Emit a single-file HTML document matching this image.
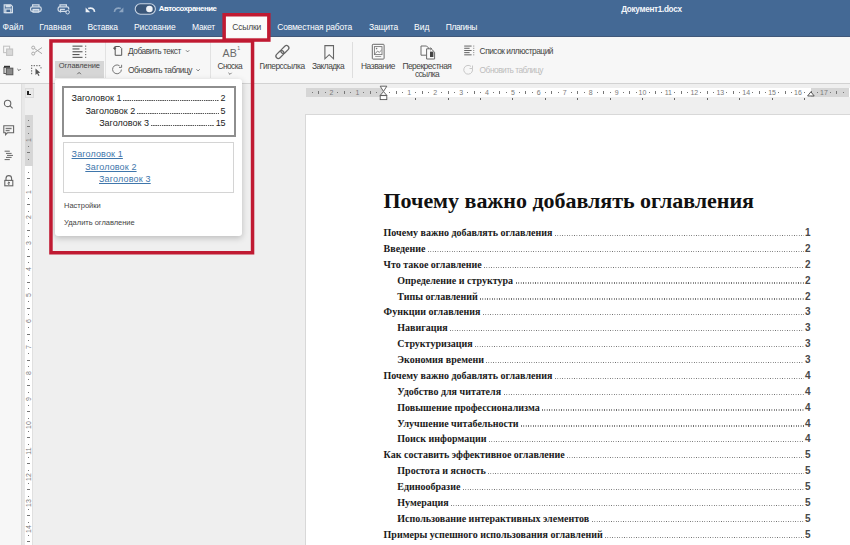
<!DOCTYPE html>
<html><head><meta charset="utf-8">
<style>
*{margin:0;padding:0;box-sizing:border-box}
html,body{width:850px;height:545px;overflow:hidden;background:#efefef;font-family:"Liberation Sans",sans-serif}
body{position:relative}
.a{position:absolute;white-space:nowrap}
svg{position:absolute;overflow:visible}
.toc{font-family:"Liberation Serif",serif;font-weight:bold;font-size:10px;line-height:10px;color:#1a1a1a}
.dots{height:1.2px;background-image:linear-gradient(to right,#6a6a6a 45%,transparent 45%);background-size:2.4px 1.2px}
.pn{font-family:"Liberation Sans",sans-serif;font-weight:bold;font-size:10px;line-height:10px;color:#484848}
.rn{font-size:7px;line-height:9px;color:#7a7a7a;text-align:center}
.vrn{font-size:7px;line-height:10px;color:#7a7a7a;text-align:center;transform:rotate(-90deg)}
</style></head><body>
<!-- header -->
<div class="a" style="left:0;top:0;width:850px;height:37px;background:#446995"></div>
<div class="a" style="left:0;top:35.5px;width:850px;height:1.5px;background:#40587a"></div>
<!-- active tab -->
<div class="a" style="left:225px;top:16px;width:43px;height:23px;background:#fbfbfb"></div>
<!-- toolbar -->
<div class="a" style="left:0;top:37px;width:850px;height:47px;background:#f7f7f7;border-bottom:1px solid #d2d2d2"></div>
<!-- left sidebar -->
<div class="a" style="left:0;top:84px;width:22px;height:461px;background:#f7f7f7;border-right:1px solid #dedede"></div>
<!-- rulers -->
<div class="a" style="left:306px;top:88px;width:544px;height:9px;background:#fff"></div>
<div class="a" style="left:306px;top:88px;width:77px;height:9px;background:#d6d6d6"></div>
<div class="a" style="left:811px;top:88px;width:38px;height:9px;background:#d6d6d6"></div>
<div class="a" style="left:22px;top:84px;width:3px;height:461px;background:#e8e8e8"></div>
<div class="a" style="left:25px;top:115px;width:7.6px;height:430px;background:#fff;border-right:0.6px solid #e0e0e0"></div>
<div class="a" style="left:25px;top:115px;width:7.6px;height:50.6px;background:#d6d6d6"></div>
<div class="a" style="left:24.5px;top:88px;width:9px;height:10px;background:#e9e9e9;border:1px solid #dadada"></div>
<div class="a" style="left:27px;top:90.5px;width:1.6px;height:4.5px;background:#222"></div>
<div class="a" style="left:27px;top:93.5px;width:4px;height:1.5px;background:#222"></div>
<div class="a" style="left:311.5px;top:92px;width:1px;height:1px;background:#777"></div>
<div class="a" style="left:318.0px;top:91px;width:1px;height:3px;background:#777"></div>
<div class="a" style="left:324.5px;top:92px;width:1px;height:1px;background:#777"></div>
<div class="a rn" style="left:321.5px;top:88px;width:20px">2</div>
<div class="a" style="left:337.4px;top:92px;width:1px;height:1px;background:#777"></div>
<div class="a" style="left:343.9px;top:91px;width:1px;height:3px;background:#777"></div>
<div class="a" style="left:350.4px;top:92px;width:1px;height:1px;background:#777"></div>
<div class="a rn" style="left:347.4px;top:88px;width:20px">1</div>
<div class="a" style="left:363.4px;top:92px;width:1px;height:1px;background:#777"></div>
<div class="a" style="left:369.8px;top:91px;width:1px;height:3px;background:#777"></div>
<div class="a" style="left:376.3px;top:92px;width:1px;height:1px;background:#777"></div>
<div class="a" style="left:389.3px;top:92px;width:1px;height:1px;background:#777"></div>
<div class="a" style="left:395.8px;top:91px;width:1px;height:3px;background:#777"></div>
<div class="a" style="left:402.2px;top:92px;width:1px;height:1px;background:#777"></div>
<div class="a rn" style="left:399.2px;top:88px;width:20px">1</div>
<div class="a" style="left:415.2px;top:92px;width:1px;height:1px;background:#777"></div>
<div class="a" style="left:421.7px;top:91px;width:1px;height:3px;background:#777"></div>
<div class="a" style="left:428.2px;top:92px;width:1px;height:1px;background:#777"></div>
<div class="a rn" style="left:425.1px;top:88px;width:20px">2</div>
<div class="a" style="left:441.1px;top:92px;width:1px;height:1px;background:#777"></div>
<div class="a" style="left:447.6px;top:91px;width:1px;height:3px;background:#777"></div>
<div class="a" style="left:454.1px;top:92px;width:1px;height:1px;background:#777"></div>
<div class="a rn" style="left:451.1px;top:88px;width:20px">3</div>
<div class="a" style="left:467.0px;top:92px;width:1px;height:1px;background:#777"></div>
<div class="a" style="left:473.5px;top:91px;width:1px;height:3px;background:#777"></div>
<div class="a" style="left:480.0px;top:92px;width:1px;height:1px;background:#777"></div>
<div class="a rn" style="left:477.0px;top:88px;width:20px">4</div>
<div class="a" style="left:493.0px;top:92px;width:1px;height:1px;background:#777"></div>
<div class="a" style="left:499.4px;top:91px;width:1px;height:3px;background:#777"></div>
<div class="a" style="left:505.9px;top:92px;width:1px;height:1px;background:#777"></div>
<div class="a rn" style="left:502.9px;top:88px;width:20px">5</div>
<div class="a" style="left:518.9px;top:92px;width:1px;height:1px;background:#777"></div>
<div class="a" style="left:525.4px;top:91px;width:1px;height:3px;background:#777"></div>
<div class="a" style="left:531.8px;top:92px;width:1px;height:1px;background:#777"></div>
<div class="a rn" style="left:528.8px;top:88px;width:20px">6</div>
<div class="a" style="left:544.8px;top:92px;width:1px;height:1px;background:#777"></div>
<div class="a" style="left:551.3px;top:91px;width:1px;height:3px;background:#777"></div>
<div class="a" style="left:557.8px;top:92px;width:1px;height:1px;background:#777"></div>
<div class="a rn" style="left:554.7px;top:88px;width:20px">7</div>
<div class="a" style="left:570.7px;top:92px;width:1px;height:1px;background:#777"></div>
<div class="a" style="left:577.2px;top:91px;width:1px;height:3px;background:#777"></div>
<div class="a" style="left:583.7px;top:92px;width:1px;height:1px;background:#777"></div>
<div class="a rn" style="left:580.7px;top:88px;width:20px">8</div>
<div class="a" style="left:596.6px;top:92px;width:1px;height:1px;background:#777"></div>
<div class="a" style="left:603.1px;top:91px;width:1px;height:3px;background:#777"></div>
<div class="a" style="left:609.6px;top:92px;width:1px;height:1px;background:#777"></div>
<div class="a rn" style="left:606.6px;top:88px;width:20px">9</div>
<div class="a" style="left:622.6px;top:92px;width:1px;height:1px;background:#777"></div>
<div class="a" style="left:629.0px;top:91px;width:1px;height:3px;background:#777"></div>
<div class="a" style="left:635.5px;top:92px;width:1px;height:1px;background:#777"></div>
<div class="a rn" style="left:632.5px;top:88px;width:20px">10</div>
<div class="a" style="left:648.5px;top:92px;width:1px;height:1px;background:#777"></div>
<div class="a" style="left:655.0px;top:91px;width:1px;height:3px;background:#777"></div>
<div class="a" style="left:661.4px;top:92px;width:1px;height:1px;background:#777"></div>
<div class="a rn" style="left:658.4px;top:88px;width:20px">11</div>
<div class="a" style="left:674.4px;top:92px;width:1px;height:1px;background:#777"></div>
<div class="a" style="left:680.9px;top:91px;width:1px;height:3px;background:#777"></div>
<div class="a" style="left:687.4px;top:92px;width:1px;height:1px;background:#777"></div>
<div class="a rn" style="left:684.3px;top:88px;width:20px">12</div>
<div class="a" style="left:700.3px;top:92px;width:1px;height:1px;background:#777"></div>
<div class="a" style="left:706.8px;top:91px;width:1px;height:3px;background:#777"></div>
<div class="a" style="left:713.3px;top:92px;width:1px;height:1px;background:#777"></div>
<div class="a rn" style="left:710.3px;top:88px;width:20px">13</div>
<div class="a" style="left:726.2px;top:92px;width:1px;height:1px;background:#777"></div>
<div class="a" style="left:732.7px;top:91px;width:1px;height:3px;background:#777"></div>
<div class="a" style="left:739.2px;top:92px;width:1px;height:1px;background:#777"></div>
<div class="a rn" style="left:736.2px;top:88px;width:20px">14</div>
<div class="a" style="left:752.2px;top:92px;width:1px;height:1px;background:#777"></div>
<div class="a" style="left:758.6px;top:91px;width:1px;height:3px;background:#777"></div>
<div class="a" style="left:765.1px;top:92px;width:1px;height:1px;background:#777"></div>
<div class="a rn" style="left:762.1px;top:88px;width:20px">15</div>
<div class="a" style="left:778.1px;top:92px;width:1px;height:1px;background:#777"></div>
<div class="a" style="left:784.6px;top:91px;width:1px;height:3px;background:#777"></div>
<div class="a" style="left:791.0px;top:92px;width:1px;height:1px;background:#777"></div>
<div class="a rn" style="left:788.0px;top:88px;width:20px">16</div>
<div class="a" style="left:804.0px;top:92px;width:1px;height:1px;background:#777"></div>
<div class="a" style="left:810.5px;top:91px;width:1px;height:3px;background:#777"></div>
<div class="a" style="left:817.0px;top:92px;width:1px;height:1px;background:#777"></div>
<div class="a rn" style="left:813.9px;top:88px;width:20px">17</div>
<div class="a" style="left:829.9px;top:92px;width:1px;height:1px;background:#777"></div>
<div class="a" style="left:836.4px;top:91px;width:1px;height:3px;background:#777"></div>
<div class="a" style="left:842.9px;top:92px;width:1px;height:1px;background:#777"></div>
<div class="a" style="left:415.2px;top:98px;width:1px;height:2px;background:#666"></div>
<div class="a" style="left:447.6px;top:98px;width:1px;height:2px;background:#666"></div>
<div class="a" style="left:480.0px;top:98px;width:1px;height:2px;background:#666"></div>
<div class="a" style="left:512.4px;top:98px;width:1px;height:2px;background:#666"></div>
<div class="a" style="left:544.8px;top:98px;width:1px;height:2px;background:#666"></div>
<div class="a" style="left:577.2px;top:98px;width:1px;height:2px;background:#666"></div>
<div class="a" style="left:609.6px;top:98px;width:1px;height:2px;background:#666"></div>
<div class="a" style="left:642.0px;top:98px;width:1px;height:2px;background:#666"></div>
<div class="a" style="left:674.4px;top:98px;width:1px;height:2px;background:#666"></div>
<div class="a" style="left:706.8px;top:98px;width:1px;height:2px;background:#666"></div>
<div class="a" style="left:739.2px;top:98px;width:1px;height:2px;background:#666"></div>
<div class="a" style="left:771.6px;top:98px;width:1px;height:2px;background:#666"></div>
<div class="a" style="left:804.0px;top:98px;width:1px;height:2px;background:#666"></div>
<div class="a" style="left:27.8px;top:119.7px;width:1px;height:1px;background:#777"></div>
<div class="a" style="left:26.5px;top:126.2px;width:3.5px;height:1px;background:#777"></div>
<div class="a" style="left:27.8px;top:132.7px;width:1px;height:1px;background:#777"></div>
<div class="a vrn" style="left:18.6px;top:134.7px;width:20px;height:10px">1</div>
<div class="a" style="left:27.8px;top:145.7px;width:1px;height:1px;background:#777"></div>
<div class="a" style="left:26.5px;top:152.1px;width:3.5px;height:1px;background:#777"></div>
<div class="a" style="left:27.8px;top:158.6px;width:1px;height:1px;background:#777"></div>
<div class="a" style="left:27.8px;top:171.6px;width:1px;height:1px;background:#777"></div>
<div class="a" style="left:26.5px;top:178.1px;width:3.5px;height:1px;background:#777"></div>
<div class="a" style="left:27.8px;top:184.5px;width:1px;height:1px;background:#777"></div>
<div class="a vrn" style="left:18.6px;top:186.5px;width:20px;height:10px">1</div>
<div class="a" style="left:27.8px;top:197.5px;width:1px;height:1px;background:#777"></div>
<div class="a" style="left:26.5px;top:204.0px;width:3.5px;height:1px;background:#777"></div>
<div class="a" style="left:27.8px;top:210.5px;width:1px;height:1px;background:#777"></div>
<div class="a vrn" style="left:18.6px;top:212.4px;width:20px;height:10px">2</div>
<div class="a" style="left:27.8px;top:223.4px;width:1px;height:1px;background:#777"></div>
<div class="a" style="left:26.5px;top:229.9px;width:3.5px;height:1px;background:#777"></div>
<div class="a" style="left:27.8px;top:236.4px;width:1px;height:1px;background:#777"></div>
<div class="a vrn" style="left:18.6px;top:238.4px;width:20px;height:10px">3</div>
<div class="a" style="left:27.8px;top:249.3px;width:1px;height:1px;background:#777"></div>
<div class="a" style="left:26.5px;top:255.8px;width:3.5px;height:1px;background:#777"></div>
<div class="a" style="left:27.8px;top:262.3px;width:1px;height:1px;background:#777"></div>
<div class="a vrn" style="left:18.6px;top:264.3px;width:20px;height:10px">4</div>
<div class="a" style="left:27.8px;top:275.3px;width:1px;height:1px;background:#777"></div>
<div class="a" style="left:26.5px;top:281.7px;width:3.5px;height:1px;background:#777"></div>
<div class="a" style="left:27.8px;top:288.2px;width:1px;height:1px;background:#777"></div>
<div class="a vrn" style="left:18.6px;top:290.2px;width:20px;height:10px">5</div>
<div class="a" style="left:27.8px;top:301.2px;width:1px;height:1px;background:#777"></div>
<div class="a" style="left:26.5px;top:307.7px;width:3.5px;height:1px;background:#777"></div>
<div class="a" style="left:27.8px;top:314.1px;width:1px;height:1px;background:#777"></div>
<div class="a vrn" style="left:18.6px;top:316.1px;width:20px;height:10px">6</div>
<div class="a" style="left:27.8px;top:327.1px;width:1px;height:1px;background:#777"></div>
<div class="a" style="left:26.5px;top:333.6px;width:3.5px;height:1px;background:#777"></div>
<div class="a" style="left:27.8px;top:340.1px;width:1px;height:1px;background:#777"></div>
<div class="a vrn" style="left:18.6px;top:342.0px;width:20px;height:10px">7</div>
<div class="a" style="left:27.8px;top:353.0px;width:1px;height:1px;background:#777"></div>
<div class="a" style="left:26.5px;top:359.5px;width:3.5px;height:1px;background:#777"></div>
<div class="a" style="left:27.8px;top:366.0px;width:1px;height:1px;background:#777"></div>
<div class="a vrn" style="left:18.6px;top:368.0px;width:20px;height:10px">8</div>
<div class="a" style="left:27.8px;top:378.9px;width:1px;height:1px;background:#777"></div>
<div class="a" style="left:26.5px;top:385.4px;width:3.5px;height:1px;background:#777"></div>
<div class="a" style="left:27.8px;top:391.9px;width:1px;height:1px;background:#777"></div>
<div class="a vrn" style="left:18.6px;top:393.9px;width:20px;height:10px">9</div>
<div class="a" style="left:27.8px;top:404.9px;width:1px;height:1px;background:#777"></div>
<div class="a" style="left:26.5px;top:411.3px;width:3.5px;height:1px;background:#777"></div>
<div class="a" style="left:27.8px;top:417.8px;width:1px;height:1px;background:#777"></div>
<div class="a vrn" style="left:18.6px;top:419.8px;width:20px;height:10px">10</div>
<div class="a" style="left:27.8px;top:430.8px;width:1px;height:1px;background:#777"></div>
<div class="a" style="left:26.5px;top:437.3px;width:3.5px;height:1px;background:#777"></div>
<div class="a" style="left:27.8px;top:443.7px;width:1px;height:1px;background:#777"></div>
<div class="a vrn" style="left:18.6px;top:445.7px;width:20px;height:10px">11</div>
<div class="a" style="left:27.8px;top:456.7px;width:1px;height:1px;background:#777"></div>
<div class="a" style="left:26.5px;top:463.2px;width:3.5px;height:1px;background:#777"></div>
<div class="a" style="left:27.8px;top:469.7px;width:1px;height:1px;background:#777"></div>
<div class="a vrn" style="left:18.6px;top:471.6px;width:20px;height:10px">12</div>
<div class="a" style="left:27.8px;top:482.6px;width:1px;height:1px;background:#777"></div>
<div class="a" style="left:26.5px;top:489.1px;width:3.5px;height:1px;background:#777"></div>
<div class="a" style="left:27.8px;top:495.6px;width:1px;height:1px;background:#777"></div>
<div class="a vrn" style="left:18.6px;top:497.6px;width:20px;height:10px">13</div>
<div class="a" style="left:27.8px;top:508.5px;width:1px;height:1px;background:#777"></div>
<div class="a" style="left:26.5px;top:515.0px;width:3.5px;height:1px;background:#777"></div>
<div class="a" style="left:27.8px;top:521.5px;width:1px;height:1px;background:#777"></div>
<div class="a vrn" style="left:18.6px;top:523.5px;width:20px;height:10px">14</div>
<div class="a" style="left:27.8px;top:534.5px;width:1px;height:1px;background:#777"></div>
<div class="a" style="left:26.5px;top:540.9px;width:3.5px;height:1px;background:#777"></div>
<!-- page -->
<div class="a" style="left:305px;top:114px;width:560px;height:440px;background:#fff;border:1px solid #d8d8d8"></div>
<div class="a toc" style="left:383.6px;top:228.00px">Почему важно добавлять оглавления</div>
<div class="a dots" style="left:554.9px;top:234.80px;width:249.6px"></div>
<div class="a pn" style="left:805px;top:228.00px">1</div>
<div class="a toc" style="left:383.6px;top:244.00px">Введение</div>
<div class="a dots" style="left:427.9px;top:250.68px;width:376.6px"></div>
<div class="a pn" style="left:805px;top:244.00px">2</div>
<div class="a toc" style="left:383.6px;top:260.00px">Что такое оглавление</div>
<div class="a dots" style="left:484.3px;top:266.56px;width:320.2px"></div>
<div class="a pn" style="left:805px;top:260.00px">2</div>
<div class="a toc" style="left:397.3px;top:276.00px">Определение и структура</div>
<div class="a dots" style="left:515.5px;top:282.44px;width:289.0px"></div>
<div class="a pn" style="left:805px;top:276.00px">2</div>
<div class="a toc" style="left:397.3px;top:292.00px">Типы оглавлений</div>
<div class="a dots" style="left:480.3px;top:298.32px;width:324.2px"></div>
<div class="a pn" style="left:805px;top:292.00px">2</div>
<div class="a toc" style="left:383.6px;top:307.00px">Функции оглавления</div>
<div class="a dots" style="left:482.9px;top:314.20px;width:321.6px"></div>
<div class="a pn" style="left:805px;top:307.00px">3</div>
<div class="a toc" style="left:397.3px;top:323.00px">Навигация</div>
<div class="a dots" style="left:450.2px;top:330.08px;width:354.3px"></div>
<div class="a pn" style="left:805px;top:323.00px">3</div>
<div class="a toc" style="left:397.3px;top:339.00px">Структуризация</div>
<div class="a dots" style="left:475.2px;top:345.96px;width:329.3px"></div>
<div class="a pn" style="left:805px;top:339.00px">3</div>
<div class="a toc" style="left:397.3px;top:355.00px">Экономия времени</div>
<div class="a dots" style="left:486.4px;top:361.84px;width:318.1px"></div>
<div class="a pn" style="left:805px;top:355.00px">3</div>
<div class="a toc" style="left:383.6px;top:371.00px">Почему важно добавлять оглавления</div>
<div class="a dots" style="left:554.9px;top:377.72px;width:249.6px"></div>
<div class="a pn" style="left:805px;top:371.00px">4</div>
<div class="a toc" style="left:397.3px;top:387.00px">Удобство для читателя</div>
<div class="a dots" style="left:503.6px;top:393.60px;width:300.9px"></div>
<div class="a pn" style="left:805px;top:387.00px">4</div>
<div class="a toc" style="left:397.3px;top:403.00px">Повышение профессионализма</div>
<div class="a dots" style="left:542.2px;top:409.48px;width:262.3px"></div>
<div class="a pn" style="left:805px;top:403.00px">4</div>
<div class="a toc" style="left:397.3px;top:419.00px">Улучшение читабельности</div>
<div class="a dots" style="left:521.1px;top:425.36px;width:283.4px"></div>
<div class="a pn" style="left:805px;top:419.00px">4</div>
<div class="a toc" style="left:397.3px;top:434.00px">Поиск информации</div>
<div class="a dots" style="left:488.9px;top:441.24px;width:315.6px"></div>
<div class="a pn" style="left:805px;top:434.00px">4</div>
<div class="a toc" style="left:383.6px;top:450.00px">Как составить эффективное оглавление</div>
<div class="a dots" style="left:567.3px;top:457.12px;width:237.2px"></div>
<div class="a pn" style="left:805px;top:450.00px">5</div>
<div class="a toc" style="left:397.3px;top:466.00px">Простота и ясность</div>
<div class="a dots" style="left:488.3px;top:473.00px;width:316.2px"></div>
<div class="a pn" style="left:805px;top:466.00px">5</div>
<div class="a toc" style="left:397.3px;top:482.00px">Единообразие</div>
<div class="a dots" style="left:462.8px;top:488.88px;width:341.7px"></div>
<div class="a pn" style="left:805px;top:482.00px">5</div>
<div class="a toc" style="left:397.3px;top:498.00px">Нумерация</div>
<div class="a dots" style="left:451.2px;top:504.76px;width:353.3px"></div>
<div class="a pn" style="left:805px;top:498.00px">5</div>
<div class="a toc" style="left:397.3px;top:514.00px">Использование интерактивных элементов</div>
<div class="a dots" style="left:591.6px;top:520.64px;width:212.9px"></div>
<div class="a pn" style="left:805px;top:514.00px">5</div>
<div class="a toc" style="left:383.6px;top:530.00px">Примеры успешного использования оглавлений</div>
<div class="a dots" style="left:605.2px;top:536.52px;width:199.3px"></div>
<div class="a pn" style="left:805px;top:530.00px">5</div>

<!-- toolbar grey button -->
<div class="a" style="left:55px;top:61px;width:49px;height:17px;background:#d6d6d6"></div>
<!-- separators -->
<div class="a" style="left:105px;top:42px;width:1px;height:36px;background:#e2e2e2"></div>
<div class="a" style="left:210px;top:42px;width:1px;height:36px;background:#e2e2e2"></div>
<div class="a" style="left:352px;top:42px;width:1px;height:36px;background:#dedede"></div>

<!-- dropdown panel -->
<div class="a" style="left:55px;top:79px;width:187px;height:156.5px;background:#fff;border-radius:3px;box-shadow:0 2px 6px rgba(0,0,0,0.22)"></div>
<div class="a" style="left:62px;top:86px;width:174px;height:51px;border:2px solid #8e8e8e"></div>
<div class="a" style="left:63px;top:142px;width:171px;height:50.5px;border:1px solid #d4d4d4"></div>
<div class="a" style="left:123.4px;top:100px;width:95.6px;height:1px;background-image:linear-gradient(to right,#555 50%,transparent 50%);background-size:2.2px 1px"></div>
<div class="a" style="left:137.2px;top:112.6px;width:81.8px;height:1px;background-image:linear-gradient(to right,#555 50%,transparent 50%);background-size:2.2px 1px"></div>
<div class="a" style="left:151px;top:124.8px;width:62.8px;height:1px;background-image:linear-gradient(to right,#555 50%,transparent 50%);background-size:2.2px 1px"></div>

<div class="a" style="left:621.20px;top:6px;font:bold 8.2px/8.2px 'Liberation Sans';color:#f4f7fb;letter-spacing:-0.313px;">Документ1.docx</div>
<div class="a" style="left:158.80px;top:5px;font:bold 7.8px/7.8px 'Liberation Sans';color:#ffffff;letter-spacing:-0.452px;">Автосохранение</div>
<div class="a" style="left:2.60px;top:23px;font:normal 8.5px/8.5px 'Liberation Sans';color:#ffffff;letter-spacing:-0.052px;">Файл</div>
<div class="a" style="left:39.30px;top:23px;font:normal 8.5px/8.5px 'Liberation Sans';color:#ffffff;letter-spacing:-0.051px;">Главная</div>
<div class="a" style="left:87.50px;top:23px;font:normal 8.5px/8.5px 'Liberation Sans';color:#ffffff;letter-spacing:-0.185px;">Вставка</div>
<div class="a" style="left:134.00px;top:23px;font:normal 8.5px/8.5px 'Liberation Sans';color:#ffffff;letter-spacing:-0.146px;">Рисование</div>
<div class="a" style="left:192.00px;top:23px;font:normal 8.5px/8.5px 'Liberation Sans';color:#ffffff;letter-spacing:-0.252px;">Макет</div>
<div class="a" style="left:277.20px;top:23px;font:normal 8.5px/8.5px 'Liberation Sans';color:#ffffff;letter-spacing:-0.175px;">Совместная работа</div>
<div class="a" style="left:369.00px;top:23px;font:normal 8.5px/8.5px 'Liberation Sans';color:#ffffff;letter-spacing:-0.190px;">Защита</div>
<div class="a" style="left:414.00px;top:23px;font:normal 8.5px/8.5px 'Liberation Sans';color:#ffffff;letter-spacing:0.036px;">Вид</div>
<div class="a" style="left:445.80px;top:23px;font:normal 8.5px/8.5px 'Liberation Sans';color:#ffffff;letter-spacing:-0.465px;">Плагины</div>
<div class="a" style="left:232.20px;top:23px;font:normal 8.5px/8.5px 'Liberation Sans';color:#444444;letter-spacing:-0.156px;">Ссылки</div>
<div class="a" style="left:58.80px;top:62px;font:normal 7.5px/7.5px 'Liberation Sans';color:#444444;letter-spacing:-0.063px;">Оглавление</div>
<div class="a" style="left:127.90px;top:47px;font:normal 8.4px/8.4px 'Liberation Sans';color:#444444;letter-spacing:-0.467px;">Добавить текст</div>
<div class="a" style="left:128.00px;top:66px;font:normal 8.4px/8.4px 'Liberation Sans';color:#444444;letter-spacing:-0.477px;">Обновить таблицу</div>
<div class="a" style="left:217.60px;top:62px;font:normal 8.4px/8.4px 'Liberation Sans';color:#444444;letter-spacing:-0.605px;">Сноска</div>
<div class="a" style="left:259.40px;top:62px;font:normal 8.4px/8.4px 'Liberation Sans';color:#444444;letter-spacing:-0.472px;">Гиперссылка</div>
<div class="a" style="left:312.00px;top:62px;font:normal 8.4px/8.4px 'Liberation Sans';color:#444444;letter-spacing:-0.553px;">Закладка</div>
<div class="a" style="left:361.00px;top:62px;font:normal 8.4px/8.4px 'Liberation Sans';color:#444444;letter-spacing:-0.430px;">Название</div>
<div class="a" style="left:402.40px;top:62px;font:normal 8.4px/8.4px 'Liberation Sans';color:#444444;letter-spacing:-0.486px;">Перекрестная</div>
<div class="a" style="left:415.00px;top:70px;font:normal 8.4px/8.4px 'Liberation Sans';color:#444444;letter-spacing:-0.633px;">ссылка</div>
<div class="a" style="left:479.60px;top:47px;font:normal 8.4px/8.4px 'Liberation Sans';color:#444444;letter-spacing:-0.501px;">Список иллюстраций</div>
<div class="a" style="left:479.60px;top:66px;font:normal 8.4px/8.4px 'Liberation Sans';color:#bdbdbd;letter-spacing:-0.514px;">Обновить таблицу</div>
<div class="a" style="left:71.60px;top:94px;font:normal 9px/9px 'Liberation Sans';color:#222222;letter-spacing:-0.003px;">Заголовок 1</div>
<div class="a" style="left:85.40px;top:107px;font:normal 9px/9px 'Liberation Sans';color:#222222;letter-spacing:-0.003px;">Заголовок 2</div>
<div class="a" style="left:99.20px;top:119px;font:normal 9px/9px 'Liberation Sans';color:#222222;letter-spacing:-0.003px;">Заголовок 3</div>
<div class="a" style="left:220.40px;top:94px;font:normal 9px/9px 'Liberation Sans';color:#222222;letter-spacing:-0.216px;">2</div>
<div class="a" style="left:220.40px;top:107px;font:normal 9px/9px 'Liberation Sans';color:#222222;letter-spacing:-0.216px;">5</div>
<div class="a" style="left:215.70px;top:119px;font:normal 9px/9px 'Liberation Sans';color:#222222;letter-spacing:-0.108px;">15</div>
<div class="a" style="left:71.60px;top:150px;font:normal 9px/9px 'Liberation Sans';color:#3f76ab;letter-spacing:0.134px;text-decoration:underline;text-underline-offset:0.6px;">Заголовок 1</div>
<div class="a" style="left:85.30px;top:163px;font:normal 9px/9px 'Liberation Sans';color:#3f76ab;letter-spacing:0.134px;text-decoration:underline;text-underline-offset:0.6px;">Заголовок 2</div>
<div class="a" style="left:99.00px;top:175px;font:normal 9px/9px 'Liberation Sans';color:#3f76ab;letter-spacing:0.170px;text-decoration:underline;text-underline-offset:0.6px;">Заголовок 3</div>
<div class="a" style="left:64.10px;top:202px;font:normal 7.5px/7.5px 'Liberation Sans';color:#444444;letter-spacing:-0.031px;">Настройки</div>
<div class="a" style="left:64.10px;top:219px;font:normal 7.5px/7.5px 'Liberation Sans';color:#444444;letter-spacing:-0.015px;">Удалить оглавление</div>
<div class="a" style="left:383.50px;top:190px;font:bold 22px/22px 'Liberation Serif';color:#111111;letter-spacing:-0.024px;">Почему важно добавлять оглавления</div>

<!-- ICONS header -->
<svg style="left:0;top:0" width="850" height="37" viewBox="0 0 850 37">
  <g fill="none" stroke="#d5dfea" stroke-width="1.2">
    <!-- save -->
    <path d="M4.2 4.8h6.6l1.6 1.6v6.2h-8.2z"/>
    <rect x="5.8" y="9" width="5" height="3.6"/>
  </g>
  <rect x="5.6" y="4.8" width="5.2" height="2.6" fill="#d5dfea"/>
  <g fill="none" stroke="#d5dfea" stroke-width="1.2">
    <!-- print -->
    <path d="M32.6 6.8v-2h6.4v2"/>
    <rect x="30.6" y="6.8" width="10.6" height="4.6" rx="1.6"/>
    <rect x="33" y="9.4" width="5.8" height="2.8" fill="#a9bcd3"/>
    <!-- quick print -->
    <path d="M60 6.8v-2h6.4v2"/>
    <path d="M66.5 11.4h-6.8a1.6 1.6 0 0 1-1.6-1.6v-1.4a1.6 1.6 0 0 1 1.6-1.6h7.4a1.6 1.6 0 0 1 1.6 1.6v1"/>
    <path d="M60.5 12.4v-3h4.4"/>
    <circle cx="67.6" cy="12.2" r="1.8" stroke-width="1"/>
  </g>
  <!-- undo -->
  <path d="M94.6 11.8c-0.4-3-3-4.6-6.4-3.2" fill="none" stroke="#eef2f7" stroke-width="1.6"/>
  <path d="M85.6 7.6v4.6h4.6z" fill="#eef2f7"/>
  <!-- redo -->
  <path d="M114.4 11.8c0.4-3 3-4.6 6.4-3.2" fill="none" stroke="#8ea6c2" stroke-width="1.6"/>
  <path d="M123.4 7.6v4.6h-4.6z" fill="#8ea6c2"/>
  <!-- toggle -->
  <rect x="135.2" y="3.8" width="20.2" height="10.4" rx="5.2" fill="#3a5679" stroke="#c8d5e5" stroke-width="1.1"/>
  <circle cx="149.4" cy="9" r="3.3" fill="#f0f3f8"/>
</svg>

<!-- ICONS toolbar -->
<svg style="left:0;top:37px" width="850" height="47" viewBox="0 37 850 47">
  <!-- copy (disabled) -->
  <g fill="none" stroke="#c4c4c4" stroke-width="1.1">
    <rect x="3.6" y="46.2" width="6" height="6.4"/>
    <rect x="6.6" y="49" width="6" height="6.4" fill="#d8d8d8"/>
  </g>
  <!-- scissors -->
  <g fill="none" stroke="#a9a9a9" stroke-width="1">
    <circle cx="33.2" cy="47.6" r="1.5"/>
    <circle cx="33.2" cy="53.6" r="1.5"/>
    <path d="M34.5 48.5l7.5 5.2M34.5 52.7l7.5-5.2"/>
  </g>
  <!-- paste -->
  <g stroke="#5a5a5a" stroke-width="1.1">
    <path d="M4 67v6.5h2" fill="none"/>
    <rect x="4" y="65.8" width="6" height="2" fill="#333" stroke="none"/>
    <rect x="6.3" y="68.2" width="6.5" height="6.5" fill="#8a8a8a"/>
  </g>
  <path d="M17.4 69l1.6 1.6 1.6-1.6" fill="none" stroke="#555" stroke-width="0.9"/>
  <!-- select all -->
  <g fill="#777">
    <rect x="31" y="65" width="1.4" height="1.2"/><rect x="33.6" y="65" width="1.4" height="1.2"/><rect x="36.2" y="65" width="1.4" height="1.2"/><rect x="38.8" y="65" width="1.4" height="1.2"/>
    <rect x="31" y="67.6" width="1.2" height="1.4"/><rect x="31" y="70.2" width="1.2" height="1.4"/><rect x="31" y="72.8" width="1.2" height="1.4"/>
    <rect x="40.4" y="67.2" width="1.2" height="1.2"/>
  </g>
  <path d="M35.5 68.5v6.5l1.6-1.5 1.4 2.5 1-0.6-1.4-2.4 2.2-0.3z" fill="#555"/>
  <!-- TOC icon -->
  <g fill="#555">
    <rect x="72.5" y="45.6" width="10" height="1.1"/>
    <rect x="72.5" y="48.4" width="7" height="1.1"/>
    <rect x="72.5" y="51.2" width="10" height="1.1"/>
    <rect x="72.5" y="54" width="7" height="1.1"/>
    <rect x="72.5" y="56.8" width="10" height="1.1"/>
    <rect x="85.2" y="45.6" width="1" height="1.1"/><rect x="85.2" y="48.4" width="1" height="1.1"/><rect x="85.2" y="51.2" width="1" height="1.1"/><rect x="85.2" y="54" width="1" height="1.1"/><rect x="85.2" y="56.8" width="1" height="1.1"/>
  </g>
  <path d="M77.3 74.2l1.8-1.8 1.8 1.8" fill="none" stroke="#555" stroke-width="0.9"/>
  <!-- add text icon -->
  <path d="M115.2 46.5h4.5l2 2v6.8h-6.5z" fill="none" stroke="#555" stroke-width="1"/>
  <path d="M113 48.2h3.2M114.6 46.6v3.2" stroke="#555" stroke-width="0.9"/>
  <path d="M186 50.3l1.6 1.6 1.6-1.6" fill="none" stroke="#666" stroke-width="0.9"/>
  <!-- refresh icon -->
  <path d="M121.4 69.6a4.4 4.4 0 1 1-1.8-3.8" fill="none" stroke="#707070" stroke-width="0.95"/>
  <path d="M121.6 64.8v2.6h-2.6" fill="none" stroke="#707070" stroke-width="0.95"/>
  <path d="M196.5 69.3l1.6 1.6 1.6-1.6" fill="none" stroke="#666" stroke-width="0.9"/>
  <!-- AB1 footnote -->
  <text x="222.6" y="57" font-family="Liberation Sans" font-size="11.6" fill="#6a6a6a" textLength="14.2" lengthAdjust="spacingAndGlyphs">AB</text>
  <text x="237.2" y="50.2" font-family="Liberation Sans" font-size="5.2" fill="#6a6a6a">1</text>
  <path d="M228.4 72.8l1.6 1.6 1.6-1.6" fill="none" stroke="#666" stroke-width="0.9"/>
  <!-- hyperlink -->
  <g fill="none" stroke="#666" stroke-width="1.25">
    <rect x="-4.6" y="-2.4" width="9.2" height="4.8" rx="2.4" transform="translate(279.9 54.5) rotate(-45)"/>
    <rect x="-4.6" y="-2.4" width="9.2" height="4.8" rx="2.4" transform="translate(284.9 49.5) rotate(-45)"/>
  </g>
  <!-- bookmark -->
  <path d="M324.9 45.6h8.6v13.2l-4.3-4.1-4.3 4.1z" fill="none" stroke="#666" stroke-width="1.1"/>
  <!-- caption -->
  <rect x="372.3" y="44.3" width="11.8" height="14.8" rx="0.8" fill="#fafafa" stroke="#6a6a6a" stroke-width="1"/>
  <rect x="374.4" y="46.6" width="7.6" height="8" fill="none" stroke="#777" stroke-width="0.9"/>
  <path d="M375 53.8l2.6-2.8 1.6 1.4 2.4-2.4" fill="none" stroke="#777" stroke-width="0.9"/>
  <circle cx="376.6" cy="48.6" r="0.8" fill="#777"/>
  <rect x="375.2" y="56.1" width="6" height="0.8" fill="#888"/>
  <!-- cross ref -->
  <path d="M421 46h5.6l2 2v7.2h-7.6z" fill="#fafafa" stroke="#6a6a6a" stroke-width="1"/>
  <path d="M426.6 48.8h4.6l3.4 3.4v6.8h-8z" fill="#fafafa" stroke="#6a6a6a" stroke-width="1"/>
  <rect x="430" y="51.6" width="3.4" height="5.4" fill="#444"/>
  <path d="M430.2 47.4l1.4 1.4-1.4 1.4" fill="none" stroke="#555" stroke-width="0.8"/>
  <!-- list of illustrations -->
  <g fill="#555">
    <rect x="464.2" y="45.6" width="7.4" height="0.9"/>
    <rect x="464.2" y="47.8" width="5.4" height="0.9"/>
    <rect x="464.2" y="50" width="7.4" height="0.9"/>
    <rect x="464.2" y="52.2" width="5.4" height="0.9"/>
    <rect x="464.2" y="54.4" width="7.4" height="0.9"/>
    <rect x="473.4" y="45.6" width="0.8" height="0.9"/><rect x="473.4" y="47.8" width="0.8" height="0.9"/><rect x="473.4" y="50" width="0.8" height="0.9"/><rect x="473.4" y="52.2" width="0.8" height="0.9"/><rect x="473.4" y="54.4" width="0.8" height="0.9"/>
  </g>
  <!-- refresh disabled -->
  <path d="M472.2 68a4.4 4.4 0 1 1-1.2-1.6" fill="none" stroke="#c8c8c8" stroke-width="1"/>
  <path d="M472.5 65.5v3h-3" fill="none" stroke="#c8c8c8" stroke-width="1"/>
</svg>

<!-- sidebar icons -->
<svg style="left:0;top:84px" width="22" height="461" viewBox="0 84 22 461">
  <g fill="none" stroke="#666" stroke-width="1.1">
    <circle cx="7.6" cy="103.4" r="3.2"/>
    <path d="M9.9 105.7l2.7 2.7"/>
    <path d="M3.8 125.8h9.8v7h-6.2l-1.8 1.8v-1.8h-1.8z"/>
  </g>
  <rect x="5.6" y="127.8" width="6" height="1.4" fill="#777"/>
  <rect x="5.6" y="130" width="4" height="1.2" fill="#777"/>
  <g fill="none" stroke="#666" stroke-width="1">
    <path d="M4.6 151.2h5.2M6 153.4h5.6M7 155.4h6M6 157.4h5.6M4.6 159.6h5.2"/>
    <path d="M6 180.2v-1.8a2.8 2.8 0 0 1 5.6 0v1.8" stroke-width="1.1"/>
    <rect x="4.8" y="180.4" width="8" height="5.4" stroke-width="1.1"/>
  </g>
  <path d="M8.8 185v-2.8M7.6 183.2l1.2-1.2 1.2 1.2" fill="none" stroke="#555" stroke-width="0.9"/>
</svg>

<!-- ruler indent markers -->
<svg style="left:0;top:0" width="850" height="545" viewBox="0 0 850 545">
  <path d="M380.2 86.2h6.6l-3.3 5.2z" fill="#fff" stroke="#555" stroke-width="0.9"/>
  <path d="M380.2 95.4h6.6l-3.3-3.8z" fill="#fff" stroke="#555" stroke-width="0.9"/>
  <rect x="380.2" y="95.6" width="6.6" height="4" fill="#fff" stroke="#555" stroke-width="0.9"/>
  <path d="M807.6 96h6.6l-3.3-4.2z" fill="#fff" stroke="#555" stroke-width="1"/>
</svg>

<!-- red highlight boxes -->
<svg style="left:0;top:0" width="850" height="545" viewBox="0 0 850 545">
  <rect x="50.95" y="40.95" width="201.6" height="211.8" fill="none" stroke="#c01a32" stroke-width="3.5"/>
  <rect x="224.15" y="14.75" width="44.7" height="25.3" fill="none" stroke="#c01a32" stroke-width="3.5"/>
</svg>
</body></html>
